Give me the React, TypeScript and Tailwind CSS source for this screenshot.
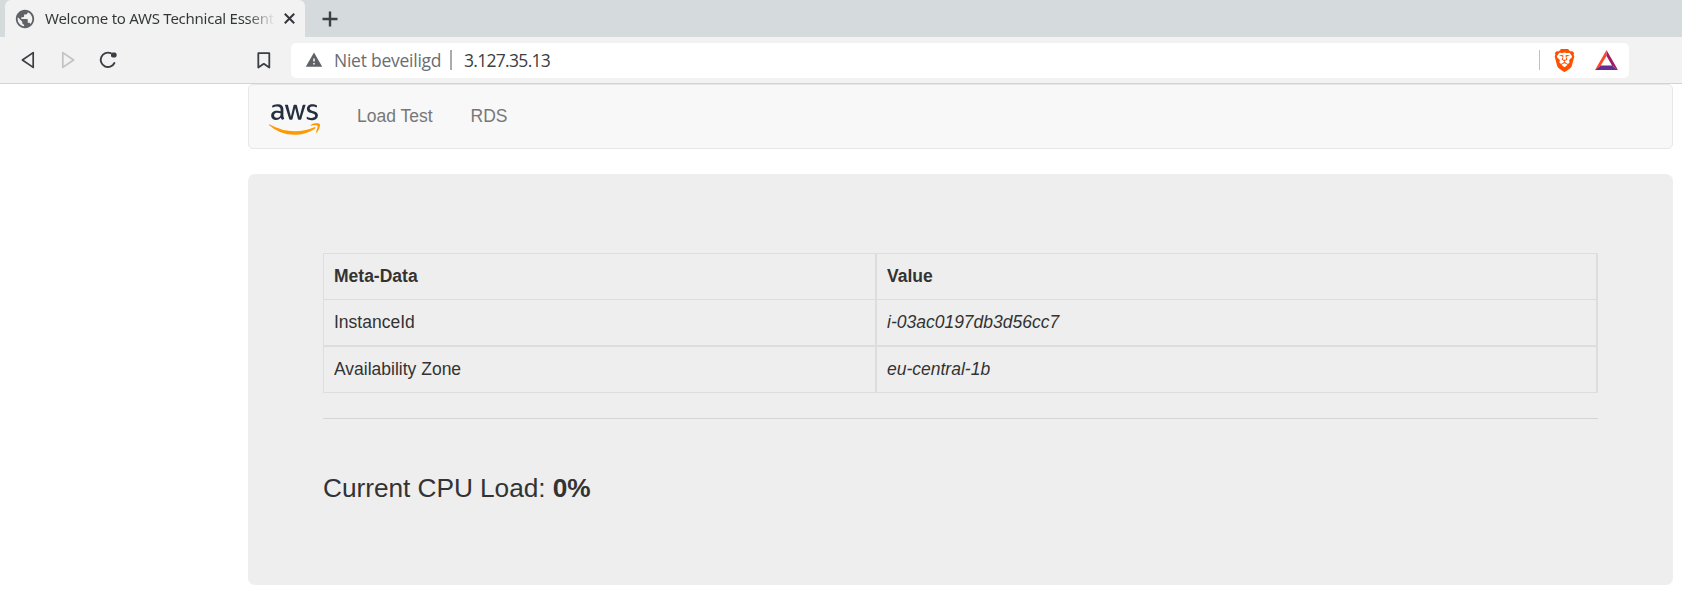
import React from "react";
import { FaAws } from "react-icons/fa";
import { MdPublic, MdWarning } from "react-icons/md";
import { SiBrave } from "react-icons/si";

const rows = [
  { name: "InstanceId", value: "i-03ac0197db3d56cc7" },
  { name: "Availability Zone", value: "eu-central-1b" },
];

function TabStrip() {
  return (
    <div className="flex h-[37px] bg-[#d5dadd] pl-[5px]">
      <div className="flex h-full w-[300px] items-center rounded-t-[6px] bg-[#f2f2f2] pl-[9px]">
        <MdPublic className="size-[22px] shrink-0 text-[#5f6368]" />
        <span className="ml-[9px] w-[230px] overflow-hidden bg-linear-to-r from-[#333638] from-88% to-transparent bg-clip-text font-['Noto_Sans',sans-serif] text-[15px] tracking-[-0.25px] whitespace-nowrap text-transparent">
          Welcome to AWS Technical Essent
        </span>
        <svg className="ml-[9px] size-[11px] shrink-0" viewBox="0 0 11 11" stroke="#33363a" strokeWidth="2">
          <path d="M.8.8l9.4 9.4M10.2.8.8 10.2" />
        </svg>
      </div>
      <svg className="mt-[11px] ml-[17px] size-[16px]" viewBox="0 0 16 16" stroke="#3c4043" strokeWidth="2.4">
        <path d="M8 .5v15M.5 8h15" />
      </svg>
    </div>
  );
}

function Toolbar() {
  return (
    <div className="flex h-[47px] items-center border-b border-[#d2d3d4] bg-[#f2f2f2] pl-[21px]">
      <svg className="h-[18px] w-[14px]" viewBox="0 0 14 18" fill="none" stroke="#3b3e42" strokeWidth="1.7" strokeLinejoin="round">
        <path d="M12.2 1.6v14.8L1.4 9z" />
      </svg>
      <svg className="ml-[26px] h-[18px] w-[14px]" viewBox="0 0 14 18" fill="none" stroke="#c1c2c4" strokeWidth="1.7" strokeLinejoin="round">
        <path d="M1.8 1.6v14.8L12.6 9z" />
      </svg>
      <svg className="ml-[24px] size-[18px]" viewBox="0 0 18 18" fill="none" stroke="#3b3e42" strokeWidth="1.9" strokeLinecap="round">
        <path d="M15.4 12A7.2 7.2 0 1 1 11.8 2.2" />
        <rect x="12" y="1.6" width="5.6" height="5" rx="1.8" fill="#3b3e42" stroke="none" />
      </svg>
      <svg className="ml-[140px] h-[17px] w-[14px]" viewBox="0 0 14 17" fill="none" stroke="#3b3e42" strokeWidth="1.8" strokeLinejoin="round">
        <path d="M1.3 1.2h11v14.4l-5.5-3.8-5.5 3.8z" />
      </svg>
      <div className="ml-[20px] flex h-[35px] w-[1338px] items-center rounded-[5px] bg-white pl-[14px] font-['Open_Sans',sans-serif] text-[17.5px]">
        <MdWarning className="size-[18px] text-[#5f6368]" />
        <span className="ml-[11px] w-[107px] tracking-[-0.25px] whitespace-nowrap text-[#6a6d71]">Niet beveiligd</span>
        <span className="ml-[9px] h-[20px] w-[2px] bg-[#a9abad]" />
        <span className="ml-[12px] tracking-[-0.7px] whitespace-nowrap text-[#3c4043]">3.127.35.13</span>
        <span className="ml-auto h-[20px] w-px bg-[#bfc1c3]" />
        <SiBrave className="mr-[19px] ml-[13px] size-[23px] text-[#ff5000]" />
        <svg className="mr-[11px] h-[20px] w-[23px]" viewBox="0 0 23 20">
          <path d="M11.5 0v6L5.8 15.6 0 20z" fill="#ff4724" />
          <path d="M11.5 0 23 20l-6-4.4L11.5 6z" fill="#9e1f63" />
          <path d="M0 20l5.8-4.4H17L23 20z" fill="#662d91" />
        </svg>
      </div>
    </div>
  );
}

function AwsLogo() {
  return (
    <>
      <svg className="absolute size-0">
        <defs>
          <linearGradient id="aws-fill" gradientUnits="userSpaceOnUse" x1="0" y1="0" x2="0" y2="512">
            <stop offset="0.575" stopColor="#252f3e" />
            <stop offset="0.575" stopColor="#ff9900" />
          </linearGradient>
        </defs>
      </svg>
      <FaAws className="mt-[6px] h-[41px] w-[51px]" fill="url(#aws-fill)" />
    </>
  );
}

export default function App() {
  return (
    <div className="h-[606px] w-[1682px] overflow-hidden bg-white font-['Liberation_Sans',Arial,sans-serif] text-[17.5px] leading-[25px] text-[#333]">
      <TabStrip />
      <Toolbar />
      <main className="ml-[248px] w-[1425px]">
        <nav className="flex h-[65px] items-center rounded-[5px] border border-[#e7e7e7] bg-[#f8f8f8] pl-[20px] text-[#777]">
          <AwsLogo />
          <span className="ml-[37px]">Load Test</span>
          <span className="ml-[38px]">RDS</span>
        </nav>
        <section className="mt-[25px] h-[411px] rounded-[7px] bg-[#eee] px-[75px] pt-[79px]">
          <div className="grid h-[140px] w-[1275px] grid-cols-[551px_1fr] grid-rows-[46px_47px_1fr] border border-r-2 border-[#ddd]">
            <div className="border-b border-[#ddd] px-[10px] pt-[10px] font-bold">Meta-Data</div>
            <div className="border-b border-l-2 border-[#ddd] px-[10px] pt-[10px] font-bold">Value</div>
            {rows.map((row, i) => (
              <React.Fragment key={row.name}>
                <div className={i === 0 ? "border-b-2 border-[#ddd] px-[10px] pt-[10px]" : "px-[10px] pt-[10px]"}>{row.name}</div>
                <div
                  className={
                    i === 0
                      ? "border-b-2 border-l-2 border-[#ddd] px-[10px] pt-[10px] italic"
                      : "border-l-2 border-[#ddd] px-[10px] pt-[10px] italic"
                  }
                >
                  {row.value}
                </div>
              </React.Fragment>
            ))}
          </div>
          <hr className="mt-[25px] border-[#d5d5d5]" />
          <p className="mt-[50px] text-[26.25px] leading-[38px] tracking-[-0.04px]">
            Current CPU Load: <b>0%</b>
          </p>
        </section>
      </main>
    </div>
  );
}
